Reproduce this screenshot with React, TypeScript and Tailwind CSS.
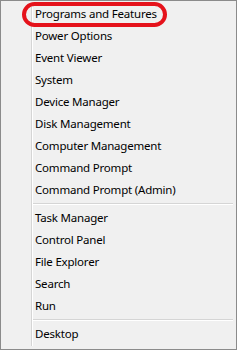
import React from "react";

const groups: string[][] = [
  [
    "Programs and Features",
    "Power Options",
    "Event Viewer",
    "System",
    "Device Manager",
    "Disk Management",
    "Computer Management",
    "Command Prompt",
    "Command Prompt (Admin)",
  ],
  ["Task Manager", "Control Panel", "File Explorer", "Search", "Run"],
  ["Desktop"],
];

export default function App() {
  return (
    <div
      className="relative w-[237px] h-[350px] border border-[#8b8b8b] bg-[#f0f0f0] pt-[2px] pb-[3px] flex text-[11.5px] tracking-[-0.2px] text-black"
      style={{ fontFamily: '"Noto Sans", "Open Sans", sans-serif' }}
    >
      <div className="w-[30px] shrink-0" />
      <div className="flex-1 flex border-l border-[#d5d5d5]">
        <div className="w-px bg-white" />
        <div className="flex-1 flex flex-col pb-[1px]">
          {groups.map((g, gi) => (
            <React.Fragment key={gi}>
              {gi > 0 && (
                <div className="pt-[2px] pb-[2px] mr-[3px]">
                  <div className="h-px bg-[#d5d5d5]" />
                  <div className="h-px bg-white" />
                </div>
              )}
              {g.map((item) => (
                <div key={item} className="h-[22px] flex items-center pl-[2px] leading-none whitespace-nowrap">
                  {item}
                </div>
              ))}
            </React.Fragment>
          ))}
        </div>
      </div>
      <div className="absolute left-[21px] top-[1px] w-[145px] h-[25px] border-[4px] border-[#e5121b] rounded-full" />
    </div>
  );
}
